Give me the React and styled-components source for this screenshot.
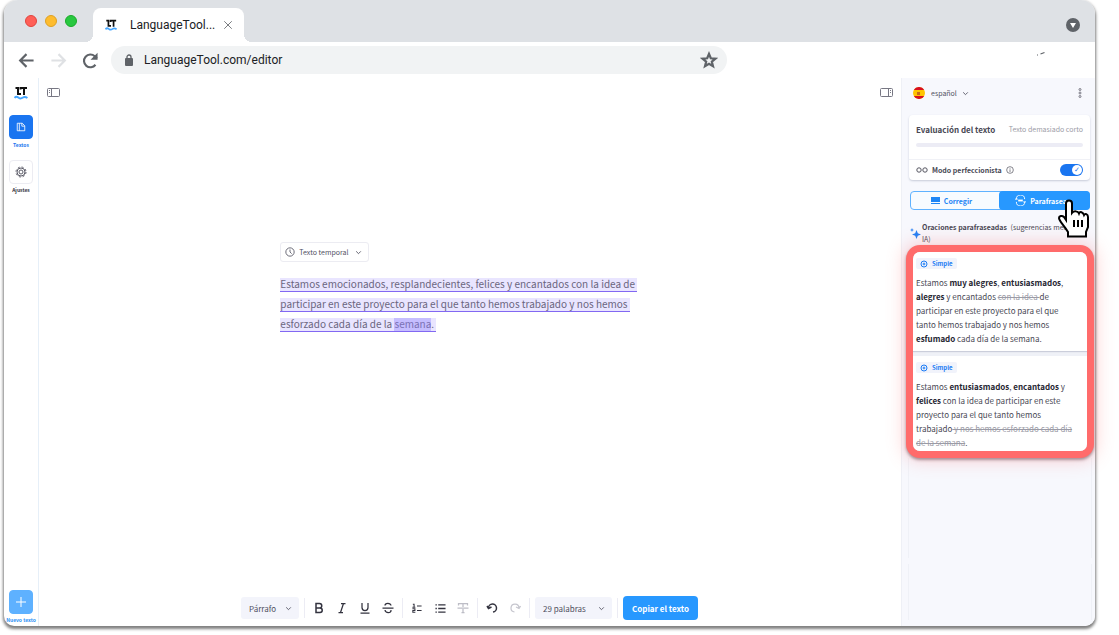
import React from 'react';
import styled, { createGlobalStyle } from 'styled-components';

const GlobalStyle = createGlobalStyle`
  * { box-sizing: border-box; }
  body {
    margin: 0;
    background: #fff;
    color: #484854;
    font-family: 'Noto Sans CJK SC', 'Noto Sans', sans-serif;
  }
  button, select, input { font-family: inherit; }
  svg { display: block; flex: none; }
`;

const Page = styled.div`
  display: flex;
  min-height: 100vh;
  padding: 0 24px 9px 4px;
  overflow: hidden;
`;

const Browser = styled.div`
  position: relative;
  display: flex;
  flex: 1;
  flex-direction: column;
  border-radius: 14px 14px 10px 10px;
  background: #fff;
  box-shadow: 0 2px 3px 1px rgba(0, 0, 0, 0.5);
`;

const TabBar = styled.div`
  display: flex;
  align-items: flex-end;
  height: 42px;
  padding: 0 15px 0 21px;
  border-radius: 14px 14px 0 0;
  background: #dee1e5;
`;

const Lights = styled.div`
  display: flex;
  gap: 8px;
  padding-bottom: 15px;
`;

const Light = styled.span`
  width: 12px;
  height: 12px;
  border: 1px solid ${props => props.$edge};
  border-radius: 50%;
  background: ${props => props.$fill};
`;

const Tab = styled.div`
  position: relative;
  display: flex;
  align-items: center;
  width: 151px;
  height: 34px;
  margin-left: 16px;
  padding: 0 11px 0 12px;
  border-radius: 8px 8px 0 0;
  background: #fff;
  color: #202124;
  font: 12px/18px Roboto, sans-serif;
  &::before,
  &::after {
    content: '';
    position: absolute;
    bottom: 0;
    width: 8px;
    height: 8px;
  }
  &::before {
    left: -8px;
    background: radial-gradient(circle at 0 0, transparent 8px, #fff 8px);
  }
  &::after {
    right: -8px;
    background: radial-gradient(circle at 100% 0, transparent 8px, #fff 8px);
  }
`;

const TabTitle = styled.span`
  flex: 1;
  margin-left: 13px;
  white-space: nowrap;
`;

const PlainButton = styled.button`
  display: flex;
  align-items: center;
  justify-content: center;
  padding: 0;
  border: none;
  background: none;
  color: ${props => props.$color || '#5f6368'};
  cursor: pointer;
`;

const TabMenu = styled(PlainButton)`
  margin: 0 0 10px auto;
`;

const NavBar = styled.div`
  display: flex;
  align-items: center;
  height: 36px;
  padding: 0 50px 0 14px;
`;

const NavButtons = styled.div`
  display: flex;
  gap: 15px;
`;

const AddressBar = styled.div`
  display: flex;
  align-items: center;
  width: 60%;
  height: 28px;
  margin: 0 auto 0 12px;
  padding: 0 9px 0 13px;
  border-radius: 14px;
  background: #f1f3f4;
`;

const Address = styled.input`
  flex: 1;
  min-width: 0;
  margin-left: 10px;
  padding: 0;
  border: none;
  outline: none;
  background: none;
  color: #202124;
  font: 12px/18px Roboto, sans-serif;
`;

const Workspace = styled.div`
  display: flex;
  flex: 1;
`;

const Sidebar = styled.nav`
  display: flex;
  flex-direction: column;
  align-items: center;
  width: 35px;
  padding: 8px 0 2px;
  border-right: 1px solid #e6eff8;
`;

const SideItem = styled.button`
  display: flex;
  flex-direction: column;
  align-items: center;
  gap: 2px;
  margin-top: ${props => props.$top};
  padding: 0;
  border: none;
  background: none;
  color: ${props => props.$color};
  font-size: 5px;
  font-weight: 700;
  line-height: 8px;
  white-space: nowrap;
  cursor: pointer;
`;

const SideTile = styled.span`
  display: flex;
  align-items: center;
  justify-content: center;
  width: 24px;
  height: 24px;
  border: 1px solid ${props => props.$border || props.$fill};
  border-radius: 4px;
  background: ${props => props.$fill};
  color: ${props => props.$color || '#fff'};
`;

const Main = styled.main`
  display: flex;
  flex: 1;
  flex-direction: column;
  min-width: 0;
`;

const MainTop = styled.div`
  display: flex;
  justify-content: space-between;
  padding: 10px 8px 0;
`;

const Document = styled.section`
  flex: 1;
  width: 376px;
  margin-left: 28%;
  padding-top: 141px;
`;

const SelectBox = styled.label`
  display: inline-flex;
  align-items: center;
  gap: ${props => props.$gap || '0'};
  position: relative;
  height: ${props => props.$height};
  padding-left: ${props => props.$left || '7px'};
  border: 1px solid ${props => props.$border || 'transparent'};
  border-radius: 3px;
  background: ${props => props.$fill || 'transparent'};
  color: #50505f;
`;

const Select = styled.select`
  appearance: none;
  width: ${props => props.$width};
  height: 100%;
  padding: 0;
  border: none;
  outline: none;
  background: none;
  color: inherit;
  font-size: ${props => props.$size || '8px'};
`;

const Chevron = styled.span`
  position: absolute;
  right: ${props => props.$right || '6px'};
  pointer-events: none;
`;

const Text = styled.p`
  margin: 12px 0 0;
  color: #6b6580;
  font-size: 10px;
  line-height: 20px;
  white-space: nowrap;
`;

const Marked = styled.span`
  padding: 0 2px 0 0;
  border-bottom: 1px solid #8268f2;
  background: linear-gradient(#e9e5ff, #e9e5ff) 0 100% / 100% 13px no-repeat;
`;

const Word = styled.span`
  background: linear-gradient(#c5bdff, #c5bdff) 0 100% / 100% 13px no-repeat;
  color: #7a70b4;
`;

const Toolbar = styled.div`
  display: flex;
  align-items: center;
  gap: 5px;
  margin-left: 202px;
  padding-bottom: 6px;
  color: #33333f;
`;

const Tools = styled.div`
  display: flex;
  gap: 7px;
  margin: 0 1px;
`;

const Tool = styled(PlainButton)`
  width: 16px;
  height: 16px;
`;

const Divider = styled.span`
  width: 1px;
  height: 20px;
  background: #ececf4;
`;

const CopyButton = styled.button`
  height: 24px;
  padding: 0 9px;
  border: none;
  border-radius: 4px;
  background: #2798ff;
  color: #fff;
  font-size: 8px;
  font-weight: 700;
  cursor: pointer;
`;

const Panel = styled.aside`
  position: relative;
  width: 194px;
  border-left: 1px solid #eef0f6;
  border-radius: 0 0 10px 0;
  background: #f7f8fd;
  font-size: 8px;
`;

const PanelTop = styled.div`
  display: flex;
  align-items: center;
  justify-content: space-between;
  height: 30px;
  padding: 0 13px 0 10px;
`;

const ScoreCard = styled.div`
  margin: 7px 5px 0 7px;
  border-radius: 4px;
  background: #fff;
  box-shadow: 0 1px 2px rgba(60, 70, 110, 0.25);
`;

const Score = styled.div`
  display: grid;
  gap: 7px;
  padding: 8px 7px 12px;
  border-bottom: 1px solid #f0f1f6;
`;

const ScoreHead = styled.div`
  display: flex;
  align-items: center;
  justify-content: space-between;
  line-height: 13px;
  white-space: nowrap;
  span { color: #9b9ba6; font-size: 7px; }
`;

const Meter = styled.div`
  height: 4px;
  border-radius: 2px;
  background: #ececf5;
`;

const ModeRow = styled.label`
  display: flex;
  align-items: center;
  gap: 4px;
  height: 20px;
  padding: 0 7px;
  font-size: 7px;
  font-weight: 700;
`;

const Switch = styled.input`
  appearance: none;
  width: 23px;
  height: 12px;
  margin: 0 0 0 auto;
  border-radius: 6px;
  background: #1a75f0;
  &::after {
    content: '✓';
    display: block;
    width: 10px;
    height: 10px;
    margin: 1px 1px 1px 12px;
    border-radius: 50%;
    background: #fff;
    color: #1a75f0;
    font: 700 7px/10px 'DejaVu Sans', sans-serif;
    text-align: center;
  }
`;

const Modes = styled.div`
  display: grid;
  grid-template-columns: 1fr 1fr;
  height: 19px;
  margin: 11px 5px 0 8px;
  border: 1px solid #5fb2ff;
  border-radius: 4px;
  background: #f7fbff;
`;

const Mode = styled.button`
  display: flex;
  align-items: center;
  justify-content: center;
  gap: 4px;
  margin: ${props => (props.$active ? '-1px' : '0')};
  padding: 0 ${props => (props.$active ? '4px' : '8px')} 0 0;
  border: none;
  border-radius: 4px;
  background: ${props => (props.$active ? '#2798ff' : 'transparent')};
  color: ${props => (props.$active ? '#fff' : '#1f86f5')};
  font-size: 7px;
  font-weight: 700;
  cursor: pointer;
`;

const Pointer = styled.svg`
  position: absolute;
  top: 121px;
  right: 5px;
`;

const Heading = styled.div`
  display: flex;
  align-items: center;
  gap: 1px;
  height: 35px;
  padding: 11px 8px 0 8px;
  font-size: 7px;
  line-height: 12px;
  b { margin-right: 2px; }
`;

const Ring = styled.div`
  position: relative;
  margin: 0 1px 0 4px;
  overflow: hidden;
  border: 7px solid #ff6b6b;
  border-radius: 14px;
  background: #eff1f7;
  box-shadow: 0 2px 3px rgba(90, 60, 70, 0.5), 0 0 18px 2px rgba(255, 107, 107, 0.3);
`;

const Suggestion = styled.article`
  padding: 6px 3px 5px;
  background: #fff;
  box-shadow: 0 1px 1px rgba(60, 70, 110, 0.2);
  & + & { margin-top: 5px; padding-bottom: 1px; }
`;

const Tag = styled.span`
  display: flex;
  align-items: center;
  gap: 4px;
  width: fit-content;
  height: 11px;
  padding: 0 4px;
  border-radius: 2px;
  background: #f1f3fb;
  color: #1c7cf5;
  font-size: 6px;
  font-weight: 700;
`;

const SuggestionText = styled.p`
  margin: 7px 0 0;
  font-size: 8px;
  line-height: 14px;
  white-space: nowrap;
  b { color: #262632; }
  s { color: #9b9ba6; }
`;

const GhostCard = styled.div`
  height: ${props => props.$height};
  margin: 0 3px 6px 6px;
  border: solid #eff1f7;
  border-width: 0 1px;
`;

const Icon = ({ size = 12, box = 24, stroke = 2, children, ...rest }) => (
  <svg width={size} height={size} viewBox={`0 0 ${box} ${box}`} fill="none" stroke="currentColor" strokeWidth={stroke} aria-hidden="true" {...rest}>
    {children}
  </svg>
);

const Down = () => (
  <Icon size={7} stroke={3}>
    <path d="M4 8l8 8 8-8" />
  </Icon>
);

const Logo = ({ size = 14 }) => (
  <svg width={size} height={size} viewBox="0 0 28 28" fill="none" aria-label="LanguageTool">
    <path d="M3 4h5v12h6M13 7V4h13M20 4v14" stroke="#111" strokeWidth="4" />
    <path d="M1 24c4-5 6-2 9 0s5 1 8-1 5-2 9 1" stroke="#45a6ff" strokeWidth="4" />
  </svg>
);

const Clock = () => (
  <Icon size={10}>
    <circle cx="12" cy="12" r="10" />
    <path d="M12 6v6l4 4" />
  </Icon>
);

const lights = [
  { fill: '#ff5f57', edge: '#e0443e' },
  { fill: '#febc2e', edge: '#dea123' },
  { fill: '#28c840', edge: '#1aab29' }
];

const SimpleTag = () => (
  <Tag>
    <Icon size={8} stroke={3}>
      <circle cx="12" cy="12" r="9" />
      <path d="M8 12h8M12 8v8" />
    </Icon>
    Simple
  </Tag>
);

const App = () => (
  <Page>
    <GlobalStyle />
    <Browser>
      <TabBar>
        <Lights>
          {lights.map(light => (
            <Light key={light.fill} $fill={light.fill} $edge={light.edge} />
          ))}
        </Lights>
        <Tab>
          <Logo size={12} />
          <TabTitle>LanguageTool...</TabTitle>
          <PlainButton aria-label="Close tab">
            <Icon size={10}>
              <path d="M3 3l18 18M21 3L3 21" />
            </Icon>
          </PlainButton>
        </Tab>
        <TabMenu aria-label="Tabs">
          <svg width="14" height="14" viewBox="0 0 14 14">
            <circle cx="7" cy="7" r="7" fill="#5f6368" />
            <path d="M4 5h6l-3 5z" fill="#fff" />
          </svg>
        </TabMenu>
      </TabBar>
      <NavBar>
        <NavButtons>
          <PlainButton aria-label="Back">
            <Icon size={17} stroke={3}>
              <path d="M22 12H4M12 3l-9 9 9 9" />
            </Icon>
          </PlainButton>
          <PlainButton aria-label="Forward" $color="#dfe1e4">
            <Icon size={17} stroke={3}>
              <path d="M2 12h18M12 3l9 9-9 9" />
            </Icon>
          </PlainButton>
          <PlainButton aria-label="Reload">
            <Icon size={17} stroke={3}>
              <path d="M19 18a9 9 0 1 1-1-12l3 3" />
              <path d="M22 1v10H12z" fill="currentColor" stroke="none" />
            </Icon>
          </PlainButton>
        </NavButtons>
        <AddressBar>
          <svg width="10" height="13" viewBox="0 0 10 13">
            <rect x="1" y="4" width="8" height="8" rx="1" fill="#5f6368" />
            <path d="M3 5V3a2 2 0 0 1 4 0v2" fill="none" stroke="#5f6368" strokeWidth="1.3" />
          </svg>
          <Address aria-label="Address" defaultValue="LanguageTool.com/editor" />
          <PlainButton aria-label="Bookmark">
            <Icon size={18} stroke={3}>
              <path d="M12 4l2.400 5.700 6.100.5-4.700 4 1.500 6-5.300-3.200-5.300 3.200 1.500-6-4.700-4 6.100-.5z" />
            </Icon>
          </PlainButton>
        </AddressBar>
        <svg width="9" height="20" viewBox="0 0 9 20">
          <path d="M1 5h1M4.500 4l4-1.500" stroke="#5f6368" strokeWidth="1.2" />
        </svg>
      </NavBar>
      <Workspace>
        <Sidebar>
          <Logo size={14} />
          <SideItem $top="15px" $color="#1a75f0">
            <SideTile $fill="#1a75f0">
              <Icon size={10}>
                <path d="M3 3h12l6 6v12H3zM8 3v18M14 3v7h7" />
              </Icon>
            </SideTile>
            Textos
          </SideItem>
          <SideItem $top="11px" $color="#33333f">
            <SideTile $fill="#fff" $border="#ececf2" $color="#5c5c68">
              <Icon size={12}>
                <circle cx="12" cy="12" r="8" />
                <circle cx="12" cy="12" r="4" />
                <circle cx="12" cy="12" r="10" strokeDasharray="4 3.85" />
              </Icon>
            </SideTile>
            Ajustes
          </SideItem>
          <SideItem $top="auto" $color="#2b90f5">
            <SideTile $fill="#5eb1ff">
              <Icon size={12}>
                <path d="M12 2v20M2 12h20" />
              </Icon>
            </SideTile>
            Nuevo texto
          </SideItem>
        </Sidebar>
        <Main>
          <MainTop>
            <PlainButton aria-label="Toggle documents" $color="#777783">
              <svg width="13" height="9" viewBox="0 0 13 9" fill="none" stroke="currentColor">
                <rect x=".5" y=".5" width="12" height="8" rx="1" />
                <path d="M4.500 1v7M2 2.500h1M2 4.500h1" />
              </svg>
            </PlainButton>
            <PlainButton aria-label="Toggle suggestions" $color="#777783">
              <svg width="13" height="9" viewBox="0 0 13 9" fill="none" stroke="currentColor">
                <rect x=".5" y=".5" width="12" height="8" rx="1" />
                <path d="M8.500 1v7M10 2.500h1M10 4.500h1" />
              </svg>
            </PlainButton>
          </MainTop>
          <Document>
            <SelectBox $height="20px" $border="#ececf2" $left="4px" $gap="4px">
              <Clock />
              <Select $width="69px" $size="7px" aria-label="Texto">
                <option>Texto temporal</option>
              </Select>
              <Chevron>
                <Down />
              </Chevron>
            </SelectBox>
            <Text>
              <Marked>Estamos emocionados, resplandecientes, felices y encantados con la idea de</Marked>
              <br />
              <Marked>participar en este proyecto para el que tanto hemos trabajado y nos hemos</Marked>
              <br />
              <Marked>
                esforzado cada día de la <Word>semana</Word>.
              </Marked>
            </Text>
          </Document>
          <Toolbar>
            <SelectBox $height="22px" $fill="#f3f4fb">
              <Select $width="49px" aria-label="Estilo">
                <option>Párrafo</option>
              </Select>
              <Chevron>
                <Down />
              </Chevron>
            </SelectBox>
            <Divider />
            <Tools>
              <Tool aria-label="Negrita" $color="#33333f">
                <Icon size={12} stroke={3}>
                  <path d="M6 3h7a4 4 0 0 1 0 9H6zM6 12h8a4 4 0 0 1 0 9H6z" />
                </Icon>
              </Tool>
              <Tool aria-label="Cursiva" $color="#33333f">
                <Icon size={12} stroke={2.500}>
                  <path d="M10 3h9M5 21h9M15 3L9 21" />
                </Icon>
              </Tool>
              <Tool aria-label="Subrayado" $color="#33333f">
                <Icon size={12} stroke={2.500}>
                  <path d="M6 2v9a6 6 0 0 0 12 0V2M3 22h18" />
                </Icon>
              </Tool>
              <Tool aria-label="Tachado" $color="#33333f">
                <Icon size={12} stroke={2.500}>
                  <path d="M18 7c-1-6-12-6-12 0M6 16c1 7 13 7 12 0M1 12h22" />
                </Icon>
              </Tool>
            </Tools>
            <Divider />
            <Tools>
              <Tool aria-label="Lista numerada" $color="#33333f">
                <Icon size={10} stroke={2.500}>
                  <path d="M12 7h11M12 18h11M2 3h3v7M1 10h7M1 14h6v4H2v4h6" />
                </Icon>
              </Tool>
              <Tool aria-label="Lista" $color="#33333f">
                <Icon size={11} stroke={3}>
                  <path d="M7 4h16M7 12h16M7 20h16M1 4h3M1 12h3M1 20h3" />
                </Icon>
              </Tool>
              <Tool aria-label="Borrar formato" $color="#bdbdc6">
                <Icon size={12} stroke={2.500}>
                  <path d="M3 7V3h18v4M12 3v7M1 12h22M12 14v7M9 21h6" />
                </Icon>
              </Tool>
            </Tools>
            <Divider />
            <Tools>
              <Tool aria-label="Deshacer" $color="#33333f">
                <Icon size={12} stroke={3}>
                  <path d="M5 12a8 8 0 1 1 9 8M2 8l3 5 6-3" />
                </Icon>
              </Tool>
              <Tool aria-label="Rehacer" $color="#c6c6ce">
                <Icon size={12} stroke={2.500}>
                  <path d="M20 12a8 8 0 1 0-9 8M23 8l-3 5-6-3" />
                </Icon>
              </Tool>
            </Tools>
            <Divider />
            <SelectBox $height="22px" $fill="#f3f4fb">
              <Select $width="68px" aria-label="Recuento">
                <option>29 palabras</option>
              </Select>
              <Chevron>
                <Down />
              </Chevron>
            </SelectBox>
            <Divider />
            <CopyButton>Copiar el texto</CopyButton>
          </Toolbar>
        </Main>
        <Panel>
          <PanelTop>
            <SelectBox $height="16px" $left="0px" $gap="6px">
              <svg width="12" height="12" viewBox="0 0 12 12">
                <circle cx="6" cy="6" r="6" fill="#ffc400" />
                <path d="M.8 3a6 6 0 0 1 10.400 0zM.8 9a6 6 0 0 0 10.400 0z" fill="#d80f20" />
                <path d="M4 5h3v3H4z" fill="#c66a1c" />
              </svg>
              <Select $width="38px" $size="7px" aria-label="Idioma">
                <option>español</option>
              </Select>
              <Chevron $right="0px">
                <Down />
              </Chevron>
            </SelectBox>
            <PlainButton aria-label="Más opciones" $color="#777783">
              <svg width="4" height="10" viewBox="0 0 4 10" fill="none" stroke="currentColor">
                <circle cx="2" cy="1.500" r="1" />
                <circle cx="2" cy="5" r="1" />
                <circle cx="2" cy="8.500" r="1" />
              </svg>
            </PlainButton>
          </PanelTop>
          <ScoreCard>
            <Score>
              <ScoreHead>
                <b>Evaluación del texto</b>
                <span>Texto demasiado corto</span>
              </ScoreHead>
              <Meter />
            </Score>
            <ModeRow>
              <svg width="12" height="6" viewBox="0 0 12 6" fill="none" stroke="#555560">
                <circle cx="3" cy="3" r="2.200" />
                <circle cx="9" cy="3" r="2.200" />
              </svg>
              Modo perfeccionista
              <Icon size={8}>
                <circle cx="12" cy="12" r="10" />
                <path d="M12 6v2M12 10v8" />
              </Icon>
              <Switch type="checkbox" defaultChecked />
            </ModeRow>
          </ScoreCard>
          <Modes>
            <Mode>
              <svg width="9" height="7" viewBox="0 0 9 7">
                <path d="M0 0h9v5H0zM0 6h9v1H0z" fill="#1f86f5" />
              </svg>
              Corregir
            </Mode>
            <Mode $active>
              <Icon size={11}>
                <path d="M3 9a9 9 0 0 1 18 0M21 15a9 9 0 0 1-18 0M0 9h6M18 15h6" />
                <path d="M7 12h10" strokeWidth="4" />
              </Icon>
              Parafrasear
            </Mode>
          </Modes>
          <Heading>
            <svg width="11" height="11" viewBox="0 0 11 11" fill="#2480f5">
              <path d="M6.500 2l1.300 3.200L11 6.500 7.800 7.800 6.500 11 5.200 7.800 2 6.500l3.200-1.300zM2 0l.6 1.400L4 2l-1.400.6L2 4l-.6-1.400L0 2l1.400-.6z" />
            </svg>
            <div>
              <b>Oraciones parafraseadas</b> (sugerencias mediante IA)
            </div>
          </Heading>
          <Ring>
            <Suggestion>
              <SimpleTag />
              <SuggestionText>
                Estamos <b>muy alegres</b>, <b>entusiasmados</b>,<br />
                <b>alegres</b> y encantados <s>con la idea </s>de
                <br />
                participar en este proyecto para el que
                <br />
                tanto hemos trabajado y nos hemos
                <br />
                <b>esfumado</b> cada día de la semana.
              </SuggestionText>
            </Suggestion>
            <Suggestion>
              <SimpleTag />
              <SuggestionText>
                Estamos <b>entusiasmados</b>, <b>encantados</b> y<br />
                <b>felices</b> con la idea de participar en este
                <br />
                proyecto para el que tanto hemos
                <br />
                trabajado<s> y nos hemos esforzado cada día</s>
                <br />
                <s>de la semana</s>.
              </SuggestionText>
            </Suggestion>
          </Ring>
          <GhostCard $height="100px" />
          <GhostCard $height="56px" />
          <Pointer width="33" height="39" viewBox="0 0 33 39">
            <path
              d="M12 1.500c-2 0-3 1-3 3V21l-2-3c-2-2-5-1-5 1 0 3 5 7 9 14v4.500h18V33l2-5V18c0-3-3-4-4-2-1-3-4-4-5-1.500-1-2.500-5-3-7-.500V4.500c0-2-1-3-3-3z"
              fill="#fff"
              stroke="#000"
              strokeWidth="2"
            />
            <path d="M17 21v7M21 21v7M25 21v7" stroke="#000" strokeWidth="2" />
          </Pointer>
        </Panel>
      </Workspace>
    </Browser>
  </Page>
);

export default App;
